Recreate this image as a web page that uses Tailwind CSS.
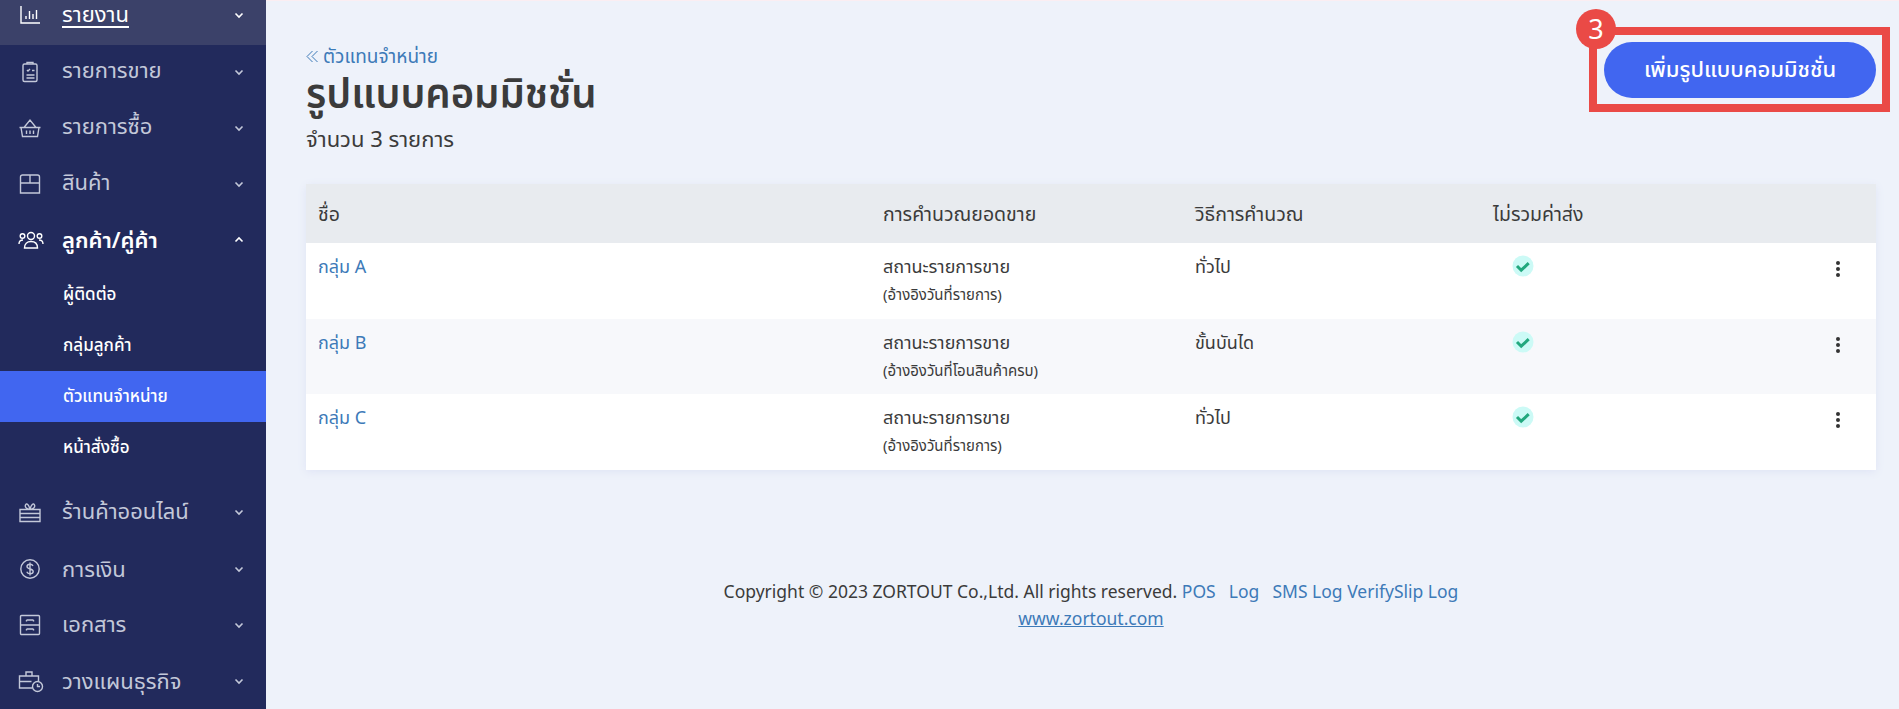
<!DOCTYPE html>
<html lang="th">
  <head>
    <meta charset="UTF-8" />
    <title>รูปแบบคอมมิชชั่น</title>
    <script src="https://cdn.jsdelivr.net/npm/@tailwindcss/browser@4"></script>
  </head>
  <body class="h-[709px] overflow-hidden bg-[#eef2fa] font-['Noto_Sans','Noto_Sans_Thai','Noto_Sans_Thai_UI','DejaVu_Sans',sans-serif] text-[#3b3b3b]">
    <div class="flex h-[709px]">
      <!-- Sidebar -->
      <aside class="w-[266px] h-[709px] shrink-0 overflow-hidden bg-[#222a5c] text-[#c3c8d9]">
        <div class="-mt-[12px] h-[57px] pb-[3px] flex items-center pl-[18px] pr-[22px] bg-[#3b4169] text-white">
          <svg class="w-[24px] h-[24px] mr-[20px]" viewBox="0 0 24 24" fill="none" stroke="currentColor" stroke-width="1.4"><path d="M3 3v17h19M8 16v-3M11.500 16V8M15 16v-5M18.500 16V7"/></svg>
          <span class="text-[22px] leading-[30px] -mt-[5px] flex-1 underline decoration-2 underline-offset-4">รายงาน</span>
          <svg class="w-[10px] h-[10px]" viewBox="0 0 10 10" fill="none" stroke="currentColor" stroke-width="1.600"><path d="M1.500 3.500 5 7l3.500-3.500"/></svg>
        </div>
        <div class="h-[56px] pb-[3px] flex items-center pl-[18px] pr-[22px]">
          <svg class="w-[24px] h-[24px] mr-[20px]" viewBox="0 0 24 24" fill="none" stroke="currentColor" stroke-width="1.400"><rect x="5" y="4" width="14" height="17.500" rx="1.500"/><path d="M9 4V2.500h6V4M9 10l1 1 2-2M14 10.500h2.500M8.500 15h8M8.500 18h8"/></svg>
          <span class="text-[22px] leading-[30px] -mt-[5px] flex-1">รายการขาย</span>
          <svg class="w-[10px] h-[10px]" viewBox="0 0 10 10" fill="none" stroke="currentColor" stroke-width="1.600"><path d="M1.500 3.500 5 7l3.500-3.500"/></svg>
        </div>
        <div class="h-[56px] pb-[3px] flex items-center pl-[18px] pr-[22px]">
          <svg class="w-[24px] h-[24px] mr-[20px]" viewBox="0 0 24 24" fill="none" stroke="currentColor" stroke-width="1.400"><path d="M1.500 11.500h21M3 11.500l1.500 9h15l1.500-9M6 11.500 12 4l6 7.500M8.500 14.500v3.500M12 14.500v3.500M15.500 14.500v3.500"/></svg>
          <span class="text-[22px] leading-[30px] -mt-[5px] flex-1">รายการซื้อ</span>
          <svg class="w-[10px] h-[10px]" viewBox="0 0 10 10" fill="none" stroke="currentColor" stroke-width="1.600"><path d="M1.500 3.500 5 7l3.500-3.500"/></svg>
        </div>
        <div class="h-[56px] pb-[3px] flex items-center pl-[18px] pr-[22px]">
          <svg class="w-[24px] h-[24px] mr-[20px]" viewBox="0 0 24 24" fill="none" stroke="currentColor" stroke-width="1.400"><path d="M4.500 3h15a2 2 0 0 1 2 2v16h-19V5a2 2 0 0 1 2-2zM2.500 11h19M12 3v8"/></svg>
          <span class="text-[22px] leading-[30px] -mt-[5px] flex-1">สินค้า</span>
          <svg class="w-[10px] h-[10px]" viewBox="0 0 10 10" fill="none" stroke="currentColor" stroke-width="1.600"><path d="M1.500 3.500 5 7l3.500-3.500"/></svg>
        </div>
        <div class="h-[56px] pb-[2px] flex items-center pl-[18px] pr-[22px] text-white">
          <svg class="w-[26px] h-[24px] mr-[18px]" viewBox="0 0 26 24" fill="none" stroke="currentColor" stroke-width="1.400"><circle cx="13" cy="8" r="3.500"/><circle cx="4.500" cy="8" r="2.300"/><circle cx="21.500" cy="8" r="2.300"/><path d="M6.500 20c0-4 2.500-6.500 6.500-6.500s6.500 2.500 6.500 6.500zM1 16c0-2.500 1.500-4 4-4M25 16c0-2.500-1.500-4-4-4"/></svg>
          <span class="text-[22px] leading-[30px] -mt-[2px] font-semibold flex-1">ลูกค้า/คู่ค้า</span>
          <svg class="w-[10px] h-[10px]" viewBox="0 0 10 10" fill="none" stroke="currentColor" stroke-width="1.600"><path d="M1.500 6.500 5 3l3.500 3.500"/></svg>
        </div>
        <div class="text-white text-[17px] font-medium">
          <div class="h-[51px] flex items-center pl-[63px] pb-[2px]">ผู้ติดต่อ</div>
          <div class="h-[51px] flex items-center pl-[63px] pb-[2px]">กลุ่มลูกค้า</div>
          <div class="h-[51px] flex items-center pl-[63px] pb-[2px] bg-[#4166f0]">ตัวแทนจำหน่าย</div>
          <div class="h-[51px] flex items-center pl-[63px] pb-[2px]">หน้าสั่งซื้อ</div>
        </div>
        <div class="h-[12px]"></div>
        <div class="h-[56px] pb-[2px] flex items-center pl-[18px] pr-[22px]">
          <svg class="w-[24px] h-[24px] mr-[20px]" viewBox="0 0 24 24" fill="none" stroke="currentColor" stroke-width="1.400"><path d="M2 9.500h20v12H2zM2 13.500h20M2 17.500h20M12 9.500C9 9 6.500 7.500 7.500 5S11 4.500 12 9.500c1-5 3.500-7 4.500-4.500s-1.500 4-4.500 4.500z"/></svg>
          <span class="text-[22px] leading-[30px] -mt-[4px] flex-1">ร้านค้าออนไลน์</span>
          <svg class="w-[10px] h-[10px]" viewBox="0 0 10 10" fill="none" stroke="currentColor" stroke-width="1.600"><path d="M1.500 3.500 5 7l3.500-3.500"/></svg>
        </div>
        <div class="h-[57px] pb-[2px] flex items-center pl-[18px] pr-[22px]">
          <svg class="w-[24px] h-[24px] mr-[20px]" viewBox="0 0 24 24" fill="none" stroke="currentColor" stroke-width="1.400"><circle cx="12" cy="12" r="9.200"/><path d="M15 9c-.5-1.300-1.500-1.800-3-1.800-1.800 0-3 .9-3 2.300 0 3.300 6.200 1.600 6.200 5 0 1.400-1.300 2.300-3.200 2.300-1.500 0-2.700-.6-3.200-2M12 5.500v13"/></svg>
          <span class="text-[22px] leading-[30px] -mt-[2px] flex-1">การเงิน</span>
          <svg class="w-[10px] h-[10px]" viewBox="0 0 10 10" fill="none" stroke="currentColor" stroke-width="1.600"><path d="M1.500 3.500 5 7l3.500-3.500"/></svg>
        </div>
        <div class="h-[56px] pb-[2px] flex items-center pl-[18px] pr-[22px]">
          <svg class="w-[24px] h-[24px] mr-[20px]" viewBox="0 0 24 24" fill="none" stroke="currentColor" stroke-width="1.400"><rect x="2.500" y="2.500" width="19" height="19" rx="1"/><path d="M2.500 12h19M8.500 7h7M8.500 7v1.500M15.500 7v1.500M8.500 16h7M8.500 16v1.500M15.500 16v1.500"/></svg>
          <span class="text-[22px] leading-[30px] -mt-[4px] flex-1">เอกสาร</span>
          <svg class="w-[10px] h-[10px]" viewBox="0 0 10 10" fill="none" stroke="currentColor" stroke-width="1.600"><path d="M1.500 3.500 5 7l3.500-3.500"/></svg>
        </div>
        <div class="h-[56px] pb-[2px] flex items-center pl-[18px] pr-[22px]">
          <svg class="w-[26px] h-[24px] mr-[18px]" viewBox="0 0 26 24" fill="none" stroke="currentColor" stroke-width="1.400"><path d="M14 19H1.500V7h19v5M1.500 12.500h12M8 7V3h6v4"/><circle cx="19.500" cy="17.500" r="5"/><path d="M19.500 15v2.500h2.500"/></svg>
          <span class="text-[22px] leading-[30px] -mt-[2px] flex-1">วางแผนธุรกิจ</span>
          <svg class="w-[10px] h-[10px]" viewBox="0 0 10 10" fill="none" stroke="currentColor" stroke-width="1.600"><path d="M1.500 3.500 5 7l3.500-3.500"/></svg>
        </div>
      </aside>

      <!-- Main -->
      <main class="flex-1 pl-[40px] pr-[23px] border-t-[1px] border-[#fbeef2]">
        <div class="flex justify-between items-start h-[183px]">
          <div class="pt-[41px]">
            <a class="flex items-center gap-[4px] text-[19px] leading-[28px] text-[#3d7ab8]">
              <svg class="w-[13px] h-[13px]" viewBox="0 0 13 13" fill="none" stroke="currentColor" stroke-width="1"><path d="M6.500 1 1 6.500 6.500 12M11.500 1 6 6.500l5.500 5.500"/></svg>
              ตัวแทนจำหน่าย
            </a>
            <h1 class="text-[40px] leading-[46px] font-semibold text-[#3b3b3b]">รูปแบบคอมมิชชั่น</h1>
            <p class="text-[22px] leading-[30px] mt-[7px]">จำนวน 3 รายการ</p>
          </div>
          <button class="relative mt-[41px] w-[272px] h-[56px] pb-[3px] rounded-full bg-[#4166f0] text-white text-[22px] font-medium">
            เพิ่มรูปแบบคอมมิชชั่น
            <span class="absolute -left-[15px] -top-[15px] -right-[14px] -bottom-[14px] border-[8px] border-[#ea4a46]"></span>
            <span class="absolute -left-[28px] -top-[33px] w-[40px] h-[40px] rounded-full bg-[#ea4a46] text-white text-[27px] font-normal leading-[40px]">3</span>
          </button>
        </div>

        <section class="shadow-[0_2px_8px_#dfe4f5] rounded-t-[3px] text-[18px]">
          <div class="grid grid-cols-[565px_312px_298px_1fr] h-[59px] items-center bg-[#e8ebef] pl-[12px] text-[19.5px]">
            <div>ชื่อ</div>
            <div>การคำนวณยอดขาย</div>
            <div>วิธีการคำนวณ</div>
            <div>ไม่รวมค่าส่ง</div>
          </div>
          <div class="relative grid grid-cols-[565px_312px_298px_1fr] h-[76px] bg-white pl-[12px] pt-[10px]">
            <div class="text-[#3d7ab8] leading-[26px]">กลุ่ม A</div>
            <div><div class="leading-[26px]">สถานะรายการขาย</div><div class="text-[15px] leading-[30px]">(อ้างอิงวันที่รายการ)</div></div>
            <div class="leading-[26px]">ทั่วไป</div>
            <svg class="ml-[19px] mt-[2px] w-[22px] h-[22px]" viewBox="0 0 22 22"><circle cx="11" cy="11" r="10.500" fill="#ccfaf6"/><path d="M5 11l4.200 4.200 7.500-7" fill="none" stroke="#22a87e" stroke-width="3"/></svg>
            <div class="absolute left-[1530px] top-[18px] flex flex-col gap-[2.500px]"><span class="w-[3.500px] h-[3.500px] rounded-full bg-[#333]"></span><span class="w-[3.500px] h-[3.500px] rounded-full bg-[#333]"></span><span class="w-[3.500px] h-[3.500px] rounded-full bg-[#333]"></span></div>
          </div>
          <div class="relative grid grid-cols-[565px_312px_298px_1fr] h-[75px] bg-[#f7f8fb] pl-[12px] pt-[10px]">
            <div class="text-[#3d7ab8] leading-[26px]">กลุ่ม B</div>
            <div><div class="leading-[26px]">สถานะรายการขาย</div><div class="text-[15px] leading-[30px]">(อ้างอิงวันที่โอนสินค้าครบ)</div></div>
            <div class="leading-[26px]">ขั้นบันได</div>
            <svg class="ml-[19px] mt-[2px] w-[22px] h-[22px]" viewBox="0 0 22 22"><circle cx="11" cy="11" r="10.500" fill="#ccfaf6"/><path d="M5 11l4.200 4.200 7.500-7" fill="none" stroke="#22a87e" stroke-width="3"/></svg>
            <div class="absolute left-[1530px] top-[18px] flex flex-col gap-[2.500px]"><span class="w-[3.500px] h-[3.500px] rounded-full bg-[#333]"></span><span class="w-[3.500px] h-[3.500px] rounded-full bg-[#333]"></span><span class="w-[3.500px] h-[3.500px] rounded-full bg-[#333]"></span></div>
          </div>
          <div class="relative grid grid-cols-[565px_312px_298px_1fr] h-[76px] bg-white pl-[12px] pt-[10px]">
            <div class="text-[#3d7ab8] leading-[26px]">กลุ่ม C</div>
            <div><div class="leading-[26px]">สถานะรายการขาย</div><div class="text-[15px] leading-[30px]">(อ้างอิงวันที่รายการ)</div></div>
            <div class="leading-[26px]">ทั่วไป</div>
            <svg class="ml-[19px] mt-[2px] w-[22px] h-[22px]" viewBox="0 0 22 22"><circle cx="11" cy="11" r="10.500" fill="#ccfaf6"/><path d="M5 11l4.200 4.200 7.500-7" fill="none" stroke="#22a87e" stroke-width="3"/></svg>
            <div class="absolute left-[1530px] top-[18px] flex flex-col gap-[2.500px]"><span class="w-[3.500px] h-[3.500px] rounded-full bg-[#333]"></span><span class="w-[3.500px] h-[3.500px] rounded-full bg-[#333]"></span><span class="w-[3.500px] h-[3.500px] rounded-full bg-[#333]"></span></div>
          </div>
        </section>

        <footer class="mt-[108px] text-center text-[17.5px] leading-[27px]">
          <div>Copyright © 2023 ZORTOUT Co.,Ltd. All rights reserved. <a class="text-[#3d7ab8]">POS</a> &nbsp;<a class="ml-[4px] text-[#3d7ab8]">Log</a> &nbsp;<a class="ml-[4px] text-[#3d7ab8]">SMS Log</a> <a class="text-[#3d7ab8]">VerifySlip Log</a></div>
          <a class="text-[#3d7ab8] underline">www.zortout.com</a>
        </footer>
      </main>
    </div>
  </body>
</html>
